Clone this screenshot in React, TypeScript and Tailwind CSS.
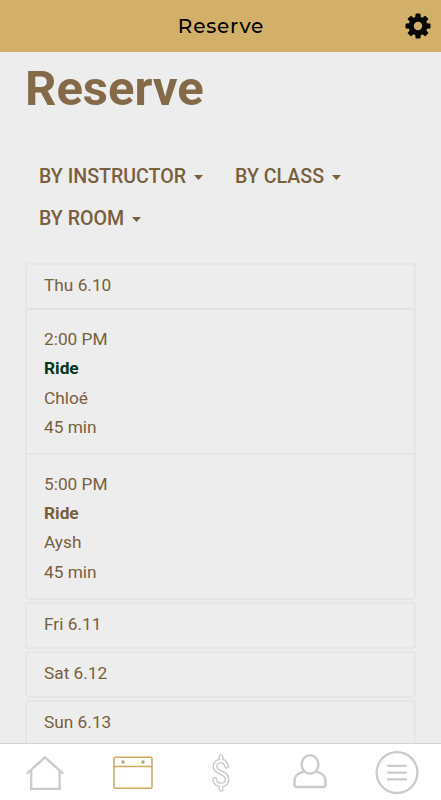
import type { ReactNode } from "react";

type Session = {
  time: string;
  name: string;
  instructor: string;
  length: string;
  active?: boolean;
};

type Day = { label: string; sessions?: Session[] };

const filters = ["By Instructor", "By Class", "By Room"];

const days: Day[] = [
  {
    label: "Thu 6.10",
    sessions: [
      { time: "2:00 PM", name: "Ride", instructor: "Chloé", length: "45 min", active: true },
      { time: "5:00 PM", name: "Ride", instructor: "Aysh", length: "45 min" },
    ],
  },
  { label: "Fri 6.11" },
  { label: "Sat 6.12" },
  { label: "Sun 6.13" },
];

const dollarPath =
  "M11 2.6V7M11 31V35.4M16.6 12.3C15.6 8.7 13.6 7 11 7C7.6 7 5 9.2 5 12.6C5 20.2 17 17.2 17 25.2C17 28.8 14.4 31 11 31C7.6 31 5.2 28.9 4.7 25.4";

function GearIcon() {
  return (
    <svg viewBox="0 0 26 26" className="size-[26px]" fill="#080706">
      {[0, 45, 90, 135].map((angle) => (
        <path
          key={angle}
          d="M10.5 1.2Q10.5.5 11.2.5H14.8Q15.5.5 15.5 1.2L16 7H10ZM10 19H16L15.5 24.8Q15.5 25.5 14.8 25.5H11.2Q10.5 25.5 10.5 24.8Z"
          transform={`rotate(${angle} 13 13)`}
        />
      ))}
      <path fillRule="evenodd" d="M13 3.6A9.4 9.4 0 1 0 13 22.4A9.4 9.4 0 1 0 13 3.6ZM13 8.8A4.2 4.2 0 1 1 13 17.2A4.2 4.2 0 1 1 13 8.8Z" />
    </svg>
  );
}

function NavButton({ label, children }: { label: string; children: ReactNode }) {
  return (
    <button aria-label={label} className="flex flex-1 items-center justify-center">
      {children}
    </button>
  );
}

function BottomNav() {
  return (
    <nav className="flex h-[57px] shrink-0 border-t border-[#d2d2d2] bg-white pt-[2px] pl-px">
      <NavButton label="Home">
        <svg viewBox="0 0 40 36" className="mr-px mb-px h-9 w-10" fill="none" stroke="#cbcbcb" strokeWidth="2.3">
          <path d="M1.8 18.6L20 2.4L38.2 18.6M6.2 15.4V33.8H34.6V15.4" />
        </svg>
      </NavButton>
      <NavButton label="Reserve">
        <svg viewBox="0 0 40 34" className="mr-px mb-px h-[34px] w-10" fill="none" stroke="#cdaa60" strokeWidth="1.5">
          <rect x="1" y="1.3" width="38" height="31" rx="1.2" />
          <path d="M1 10.5H39" />
          <circle cx="10" cy="6" r="1.7" fill="#bda474" stroke="none" />
          <circle cx="30" cy="6" r="1.7" fill="#bda474" stroke="none" />
        </svg>
      </NavButton>
      <NavButton label="Buy">
        <svg viewBox="0 0 22 38" className="mr-px h-[38px] w-[22px]" fill="none">
          <path d={dollarPath} stroke="#c6c6c6" strokeWidth="4.8" strokeLinecap="round" />
          <path d={dollarPath} stroke="white" strokeWidth="2.3" strokeLinecap="round" />
        </svg>
      </NavButton>
      <NavButton label="Account">
        <svg viewBox="0 0 36 38" className="ml-[2px] h-[38px] w-9" fill="none" stroke="#cbcbcb" strokeWidth="2.5">
          <ellipse cx="18" cy="10.5" rx="8.4" ry="9.2" />
          <path d="M11.7 17.6C5.5 19.4 2.5 21.6 2.5 27V30.8Q2.5 33 4.7 33H31.3Q33.5 33 33.5 30.8V27C33.5 21.6 30.5 19.4 24.3 17.6" />
        </svg>
      </NavButton>
      <NavButton label="Menu">
        <svg viewBox="0 0 44 44" className="size-11" fill="none" stroke="#cbcbcb" strokeWidth="2.3">
          <circle cx="22" cy="21.6" r="20.4" />
          <path d="M13 14.8H31M13 21.6H31M13 28.4H31" strokeLinecap="round" />
        </svg>
      </NavButton>
    </nav>
  );
}

function SessionRow({ session }: { session: Session }) {
  return (
    <div className="h-[144.5px] border-b-2 border-[#e5e5e5] px-[17px] pt-[15px] leading-[29.4px] last:border-b-0">
      <div>{session.time}</div>
      <div className={session.active ? "font-bold text-[#003820]" : "font-bold"}>{session.name}</div>
      <div>{session.instructor}</div>
      <div>{session.length}</div>
    </div>
  );
}

function DayCard({ day }: { day: Day }) {
  return (
    <section className="shrink-0 rounded-[4px] border-2 border-[#e6e6e6] text-[17.3px]">
      <h2 className="flex h-[43px] items-center px-[17px] pb-px">{day.label}</h2>
      {day.sessions && (
        <div className="-mb-px border-t-2 border-[#e3e3e3]">
          {day.sessions.map((session) => (
            <SessionRow key={session.time} session={session} />
          ))}
        </div>
      )}
    </section>
  );
}

export default function App() {
  return (
    <div className="flex h-screen flex-col overflow-hidden bg-[#ededed] font-[Roboto,sans-serif] text-[#785f3d]">
      <header className="grid h-[52px] shrink-0 grid-cols-[1fr_auto_1fr] items-center bg-[#d2b069] pr-[10px]">
        <span />
        <span className="pl-[11px] font-[Montserrat,Inter,sans-serif] text-[20px] font-medium tracking-[0.8px] text-black">
          Reserve
        </span>
        <button aria-label="Settings" className="justify-self-end">
          <GearIcon />
        </button>
      </header>

      <main className="min-h-0 flex-1 overflow-hidden px-[25px]">
        <h1 className="mt-[7px] text-[49px] leading-[60px] font-bold text-[#846a48]">Reserve</h1>

        <div className="mt-[37px] flex flex-wrap gap-x-8 px-[14px]">
          {filters.map((filter) => (
            <button key={filter} className="flex h-[42px] items-center gap-2 text-[19.6px] font-medium uppercase">
              {filter}
              <svg viewBox="0 0 10 5" className="h-[5px] w-[9px]" fill="currentColor" preserveAspectRatio="none">
                <path d="M0 0H10L5 5Z" />
              </svg>
            </button>
          ))}
        </div>

        <div className="mt-[23px] flex flex-col gap-[2px]">
          {days.map((day) => (
            <DayCard key={day.label} day={day} />
          ))}
        </div>
      </main>

      <BottomNav />
    </div>
  );
}
